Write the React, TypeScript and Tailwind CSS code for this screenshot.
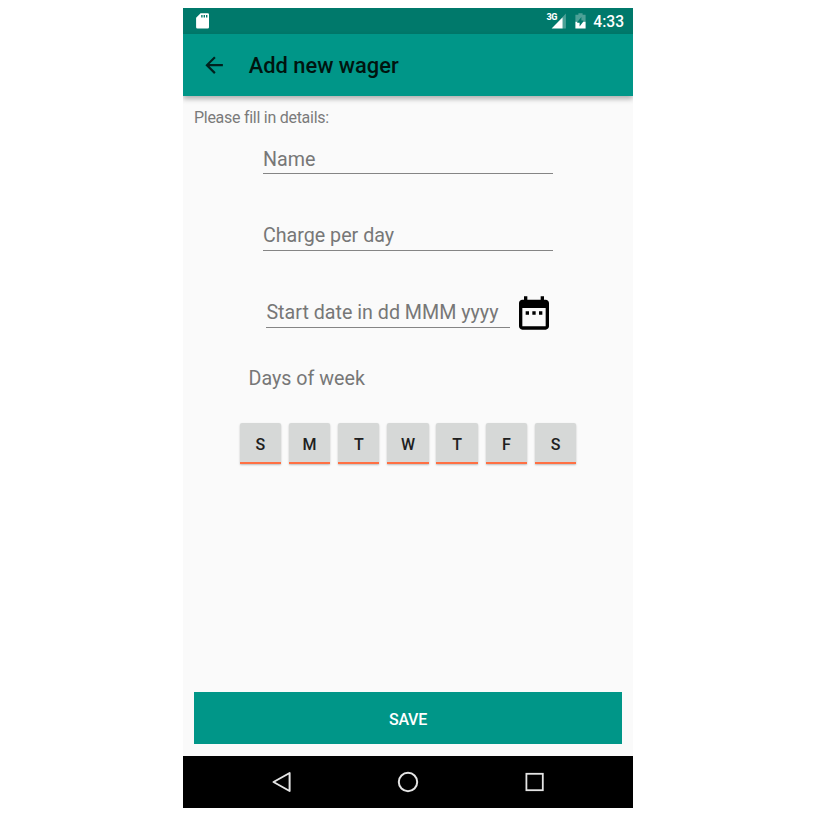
import React from "react";

const DAYS = ["S", "M", "T", "W", "T", "F", "S"];

function StatusBar() {
  return (
    <div className="flex h-[26.25px] items-start bg-[#00796b] pr-[9px] pl-[13px] text-white">
      <svg className="mt-[5px] h-4 w-[13px] shrink-0" viewBox="0 0 13 16">
        <path
          fill="#fff"
          fillRule="evenodd"
          d="M4.6 0.3H11.7Q13 .3 13 1.6V14.2Q13 15.6 11.7 15.6H1.4Q.1 15.6 .1 14.2V4.8ZM5.2 2V4.6H6.6V2ZM7.6 2V4.6H9V2ZM10 2V4.6H11.4V2Z"
        />
      </svg>
      <div className="ml-auto flex items-start">
        <span className="mt-[4px] text-[9px] leading-[10px] font-extrabold tracking-[-0.5px]">3G</span>
        <svg className="mt-[5px] -ml-[7px] h-[16px] w-[16px]" viewBox="0 0 16 16">
          <path fill="#fff" fillOpacity=".3" d="M15.9 .5V15.4H12.6V4Z" />
          <path fill="#fff" d="M12.6 4.2V15.4H1.6Z" />
        </svg>
        <svg className="mt-[5px] ml-[9px] h-4 w-[11px]" viewBox="0 0 11 16">
          <path fill="#fff" fillOpacity=".3" d="M3.4 .2H7.6V1.7H10.6V8.8H8.4V7.6H6.4V4L2.6 8.8H.4V1.7H3.4Z" />
          <path fill="#fff" d="M.4 8.8H2.2V9.8H4.6V13.6L8.2 8.8H10.6V15.6H.4Z" />
        </svg>
        <span className="ml-[7.5px] text-[15.6px] leading-[29px] font-medium">4:33</span>
      </div>
    </div>
  );
}

function AppBar() {
  return (
    <header className="relative flex h-[61.25px] items-center bg-[#009688] pl-[17.5px] shadow-[0_3px_5px_rgba(0,0,0,0.3)]">
      <svg className="h-[26.25px] w-[26.25px]" viewBox="0 0 24 24">
        <path fill="#00211e" d="M20 11H7.83l5.59-5.59L12 4l-8 8 8 8 1.41-1.41L7.83 13H20v-2z" />
      </svg>
      <h1 className="ml-[22px] pt-[2px] text-[21.875px] leading-[26px] font-medium text-[#00140f]">Add new wager</h1>
    </header>
  );
}

function Field({ label, className }: { label: string; className: string }) {
  return (
    <div className={`border-b border-[#858585] text-[19.6875px] leading-[24px] text-[#777777] ${className}`}>
      {label}
    </div>
  );
}

function NavBar() {
  return (
    <nav className="flex h-[52.5px] items-center justify-between bg-black px-[88px]">
      <svg className="h-[22px] w-[22px]" viewBox="0 0 22 22" fill="none" stroke="#e4e4e4" strokeWidth="2" strokeLinejoin="round">
        <path d="M18.6 2V20L2.5 11Z" />
      </svg>
      <svg className="h-[22px] w-[22px]" viewBox="0 0 22 22" fill="none" stroke="#e4e4e4" strokeWidth="2">
        <circle cx="11" cy="11" r="9.2" />
      </svg>
      <svg className="h-[22px] w-[22px]" viewBox="0 0 22 22" fill="none" stroke="#e4e4e4" strokeWidth="1.8">
        <rect x="3.4" y="2.8" width="16.4" height="16.4" />
      </svg>
    </nav>
  );
}

export default function App() {
  return (
    <div className="h-[816px] bg-white pt-2 font-[Roboto,sans-serif]">
      <div className="mx-auto flex h-[800px] w-[450px] flex-col overflow-hidden bg-[#fafafa]">
        <StatusBar />
        <AppBar />
        <main className="flex flex-1 flex-col px-[10.9375px] pb-[11.4px]">
          <p className="mt-[13px] text-[16px] leading-[18px] tracking-[-0.27px] text-[#7a7a7a]">Please fill in details:</p>
          <div className="mt-[21.5px] ml-[69px] flex w-[290px] flex-col">
            <Field label="Name" className="h-[26px]" />
            <Field label="Charge per day" className="mt-[50px] h-[27px]" />
          </div>
          <div className="mt-[41.5px] ml-[72.5px] flex h-[40px]">
            <Field label="Start date in dd MMM yyyy" className="mt-[8px] h-[27px] w-[243.5px]" />
            <svg className="ml-1 h-10 w-10" viewBox="0 0 24 24">
              <path
                fill="#000"
                d="M9 11H7v2h2v-2zm4 0h-2v2h2v-2zm4 0h-2v2h2v-2zm2-7h-1V2h-2v2H8V2H6v2H5c-1.11 0-1.99.9-1.99 2L3 20c0 1.1.89 2 2 2h14c1.1 0 2-.9 2-2V6c0-1.1-.9-2-2-2zm0 16H5V9h14v11z"
              />
            </svg>
          </div>
          <h2 className="mt-[34.5px] ml-[54.6px] text-[19.6875px] leading-[24px] text-[#777777]">Days of week</h2>
          <div className="mt-[32px] ml-[45.8px] flex gap-[7.9px]">
            {DAYS.map((day, i) => (
              <button
                key={i}
                className="flex h-[41px] w-[41.3px] items-center justify-center rounded-t-[2px] border-b-[2px] border-[#ff7043] bg-[#d6d8d7] pt-[4px] text-[16px] leading-[18px] font-medium text-[#202020] shadow-[0_1px_2px_rgba(0,0,0,0.25)]"
              >
                {day}
              </button>
            ))}
          </div>
          <button className="mt-auto h-[52px] bg-[#009688] pt-[3px] text-[16px] font-medium tracking-[-0.3px] text-white">SAVE</button>
        </main>
        <NavBar />
      </div>
    </div>
  );
}
